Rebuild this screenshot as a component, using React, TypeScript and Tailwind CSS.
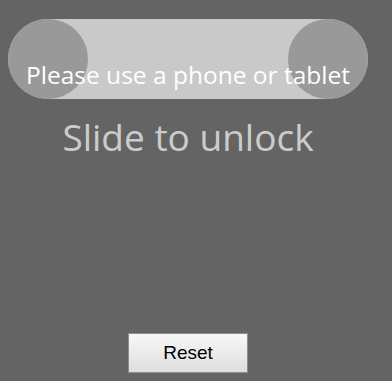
import React from "react";

export default function App() {
  return (
    <div className="min-h-[381px] w-[392px] bg-[#646464] px-2 pt-[19px]">
      <div className="flex w-[360px] flex-col items-center">
        <div className="relative h-20 w-[360px] rounded-full bg-[#c9c9c9]">
          <div className="absolute left-0 top-0 h-20 w-20 rounded-full bg-[#999999]" />
          <div className="absolute right-0 top-0 h-20 w-20 rounded-full bg-[#999999]" />
          <div className="absolute inset-0 flex items-end justify-center pb-[8px]">
            <span className="font-['Open_Sans',sans-serif] text-[24.5px] leading-[32px] text-white">
              Please use a phone or tablet
            </span>
          </div>
        </div>
        <div className="mt-[14px] font-['Open_Sans',sans-serif] text-[37px] leading-[48px] text-[#cccccc]">
          Slide to unlock
        </div>
        <button className="mt-[172px] h-[40px] w-[120px] border border-[#8e8e8e] bg-gradient-to-b from-[#f7f7f7] to-[#dedede] font-['Liberation_Sans',Arial,sans-serif] text-[19px] text-black">
          Reset
        </button>
      </div>
    </div>
  );
}
